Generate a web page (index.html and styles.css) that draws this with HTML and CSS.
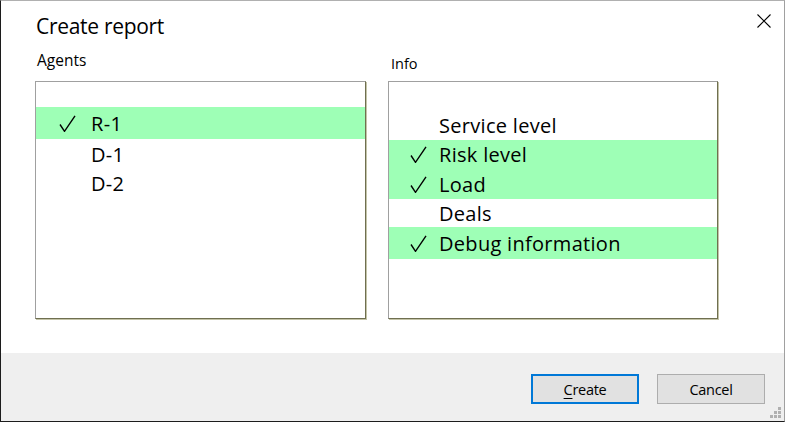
FILE: index.html
```html
<!DOCTYPE html>
<html>
<head>
<meta charset="utf-8">
<link rel="stylesheet" href="styles.css">
</head>
<body>
<div class="window">
  <div class="titlebar">
    <div class="title">Create report</div>
    <button class="close" aria-label="Close">
      <svg width="14" height="14" viewBox="0 0 14 14"><path d="M0.5 0.5 L13.5 13.5 M13.5 0.5 L0.5 13.5" stroke="#000" stroke-width="1.1" fill="none"/></svg>
    </button>
  </div>
  <div class="content">
    <div class="column agents">
      <div class="label">Agents</div>
      <div class="list">
        <div class="row empty-first short"></div>
        <div class="row checked tall"><span class="check"><svg width="17" height="17" viewBox="0 0 17 17"><path d="M1 9.5 L5.5 16.3 L16 0.8" stroke="#000" stroke-width="1.4" fill="none"/></svg></span><span class="text">R-1</span></div>
        <div class="row"><span class="check"></span><span class="text">D-1</span></div>
        <div class="row"><span class="check"></span><span class="text">D-2</span></div>
      </div>
    </div>
    <div class="column info">
      <div class="label">Info</div>
      <div class="list">
        <div class="row empty-first"></div>
        <div class="row"><span class="check"></span><span class="text">Service level</span></div>
        <div class="row checked"><span class="check"><svg width="17" height="17" viewBox="0 0 17 17"><path d="M1 9.5 L5.5 16.3 L16 0.8" stroke="#000" stroke-width="1.4" fill="none"/></svg></span><span class="text">Risk level</span></div>
        <div class="row checked"><span class="check"><svg width="17" height="17" viewBox="0 0 17 17"><path d="M1 9.5 L5.5 16.3 L16 0.8" stroke="#000" stroke-width="1.4" fill="none"/></svg></span><span class="text">Load</span></div>
        <div class="row short"><span class="check"></span><span class="text">Deals</span></div>
        <div class="row checked tall"><span class="check"><svg width="17" height="17" viewBox="0 0 17 17"><path d="M1 9.5 L5.5 16.3 L16 0.8" stroke="#000" stroke-width="1.4" fill="none"/></svg></span><span class="text">Debug information</span></div>
      </div>
    </div>
  </div>
  <div class="footer">
    <button class="btn primary"><u>C</u>reate</button>
    <button class="btn">Cancel</button>
    <div class="grip">
      <svg width="12" height="12" viewBox="0 0 12 12" fill="#b0b0b0">
        <rect x="8" y="0" width="3" height="3"/>
        <rect x="4" y="4" width="3" height="3"/><rect x="8" y="4" width="3" height="3"/>
        <rect x="0" y="8" width="3" height="3"/><rect x="4" y="8" width="3" height="3"/><rect x="8" y="8" width="3" height="3"/>
      </svg>
    </div>
  </div>
</div>
</body>
</html>
```
FILE: styles.css
```css
html, body {
  margin: 0;
  padding: 0;
  background: #ffffff;
}
body {
  width: 786px;
  height: 422px;
  overflow: hidden;
  font-family: "Open Sans", "Noto Sans", sans-serif;
  color: #000;
}
.window {
  box-sizing: border-box;
  width: 785px;
  height: 422px;
  border-left: 1px solid #1c1c1c;
  border-bottom: 1px solid #1c1c1c;
  border-right: 1px solid #a0a0a0;
  border-top: 1px solid #b0b0b0;
  display: flex;
  flex-direction: column;
  background: #fff;
}
.titlebar {
  height: 48px;
  display: flex;
  align-items: center;
  justify-content: space-between;
  padding-left: 35px;
  padding-right: 12px;
}
.title {
  font-size: 21px;
  letter-spacing: -0.3px;
  margin-top: 2px;
}
.close {
  border: none;
  background: transparent;
  padding: 0;
  width: 16px;
  height: 16px;
  display: flex;
  align-items: center;
  justify-content: center;
  margin-top: -9px;
}
.content {
  display: flex;
  gap: 22px;
  padding-left: 34px;
  height: 303px;
}
.column {
  display: flex;
  flex-direction: column;
  width: 331px;
}
.column.info {
  width: 330px;
}
.label {
  font-size: 15.5px;
  height: 32px;
  line-height: 22px;
  padding-left: 2px;
}
.info .label {
  font-size: 14.5px;
  line-height: 30px;
  padding-left: 3px;
}
.list {
  box-sizing: border-box;
  height: 238px;
  border-top: 1px solid #a0a0a0;
  border-left: 1px solid #a0a0a0;
  border-right: 1px solid #6f6f50;
  border-bottom: 1px solid #6f6f50;
  box-shadow: 1px 1px 0 #c4c4a8;
  display: flex;
  flex-direction: column;
}
.row {
  height: 29.5px;
  display: flex;
  align-items: center;
  font-size: 20px;
  letter-spacing: 0.3px;
  flex-shrink: 0;
}
.row.empty-first {
  height: 28px;
}
.row.empty-first.short {
  height: 25px;
}
.row.short {
  height: 28px;
}
.row.tall {
  height: 32px;
}
.row.checked {
  background: #9effb6;
}
.check {
  width: 55px;
  padding-left: 23px;
  box-sizing: border-box;
  display: flex;
  align-items: center;
  height: 100%;
}
.info .check {
  width: 50px;
  padding-left: 21px;
}
.check svg {
  display: block;
  margin-top: 1px;
}
.text {
  margin-top: 1px;
}
.footer {
  margin-top: auto;
  height: 68px;
  box-sizing: border-box;
  background: #efefef;
  display: flex;
  align-items: flex-start;
  padding-top: 21px;
  padding-left: 530px;
  gap: 18px;
  position: relative;
}
.btn {
  box-sizing: border-box;
  width: 108px;
  height: 30px;
  background: #e1e1e1;
  border: 1px solid #adadad;
  font-family: "Open Sans", "Noto Sans", sans-serif;
  font-size: 14.5px;
  letter-spacing: -0.3px;
  color: #000;
  padding: 0;
}
.btn.primary {
  border: 2px solid #0078d7;
}
.btn u {
  text-decoration-thickness: 1px;
  text-underline-offset: 3px;
}
.grip {
  position: absolute;
  right: 2px;
  bottom: 2px;
  width: 12px;
  height: 12px;
}
.grip svg {
  display: block;
}
```
